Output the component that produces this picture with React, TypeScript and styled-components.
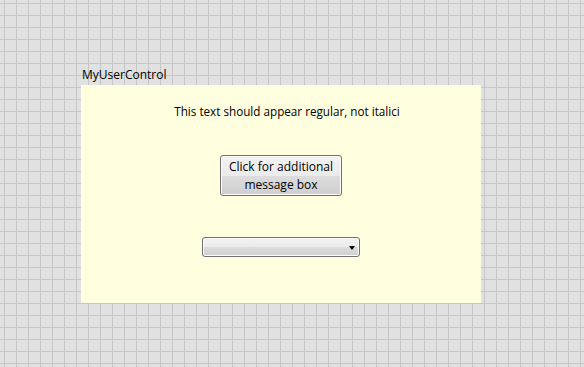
import React from "react";
import styled, { createGlobalStyle } from "styled-components";

const GlobalStyle = createGlobalStyle`
  html, body {
    margin: 0;
    padding: 0;
  }
  body {
    width: 584px;
    height: 367px;
    overflow: hidden;
    font-family: "Open Sans", "Liberation Sans", sans-serif;
    color: #000;
  }
`;

// designer surface with a 12px grid
const Surface = styled.div`
  width: 584px;
  height: 367px;
  box-sizing: border-box;
  padding: 67px 0 0 81px;
  background-color: #e1e1e1;
  background-image: linear-gradient(to right, #c6c6c6 1px, transparent 1px),
    linear-gradient(to bottom, #c6c6c6 1px, transparent 1px);
  background-size: 12px 12px;
  background-position: 4px 3px;
`;

const Caption = styled.div`
  font-size: 12px;
  line-height: 16px;
  height: 18px;
  padding-left: 1px;
`;

const Panel = styled.div`
  width: 400px;
  height: 218px;
  background: #ffffe0;
  display: flex;
  flex-direction: column;
  align-items: center;
  box-sizing: border-box;
  padding-top: 18px;
`;

const Message = styled.div`
  font-size: 11.7px;
  line-height: 16px;
  margin-left: 12px;
`;

const Button = styled.button`
  margin-top: 36px;
  width: 122px;
  height: 41px;
  border: 1px solid #707070;
  border-radius: 3px;
  background: linear-gradient(to bottom, #f2f2f2 0%, #ebebeb 50%, #dddddd 51%, #cfcfcf 100%);
  font-family: inherit;
  font-size: 12px;
  line-height: 18px;
  color: #000;
  padding: 0 4px;
  box-shadow: inset 0 0 0 1px #fcfcfc;
`;

const Select = styled.div`
  margin-top: 41px;
  width: 158px;
  height: 20px;
  box-sizing: border-box;
  border: 1px solid #707070;
  border-radius: 3px;
  background: linear-gradient(to bottom, #f2f2f2 0%, #ebebeb 50%, #dddddd 51%, #cfcfcf 100%);
  box-shadow: inset 0 0 0 1px #fcfcfc;
  display: flex;
  align-items: center;
  justify-content: flex-end;
  padding-right: 4px;
`;

const Arrow = styled.span`
  width: 0;
  height: 0;
  border-left: 3.5px solid transparent;
  border-right: 3.5px solid transparent;
  border-top: 4px solid #000;
  margin-top: 1px;
`;

export default function App() {
  return (
    <>
      <GlobalStyle />
      <Surface>
        <Caption>MyUserControl</Caption>
        <Panel>
          <Message>This text should appear regular, not italici</Message>
          <Button>
            Click for additional
            <br />
            message box
          </Button>
          <Select>
            <Arrow />
          </Select>
        </Panel>
      </Surface>
    </>
  );
}
